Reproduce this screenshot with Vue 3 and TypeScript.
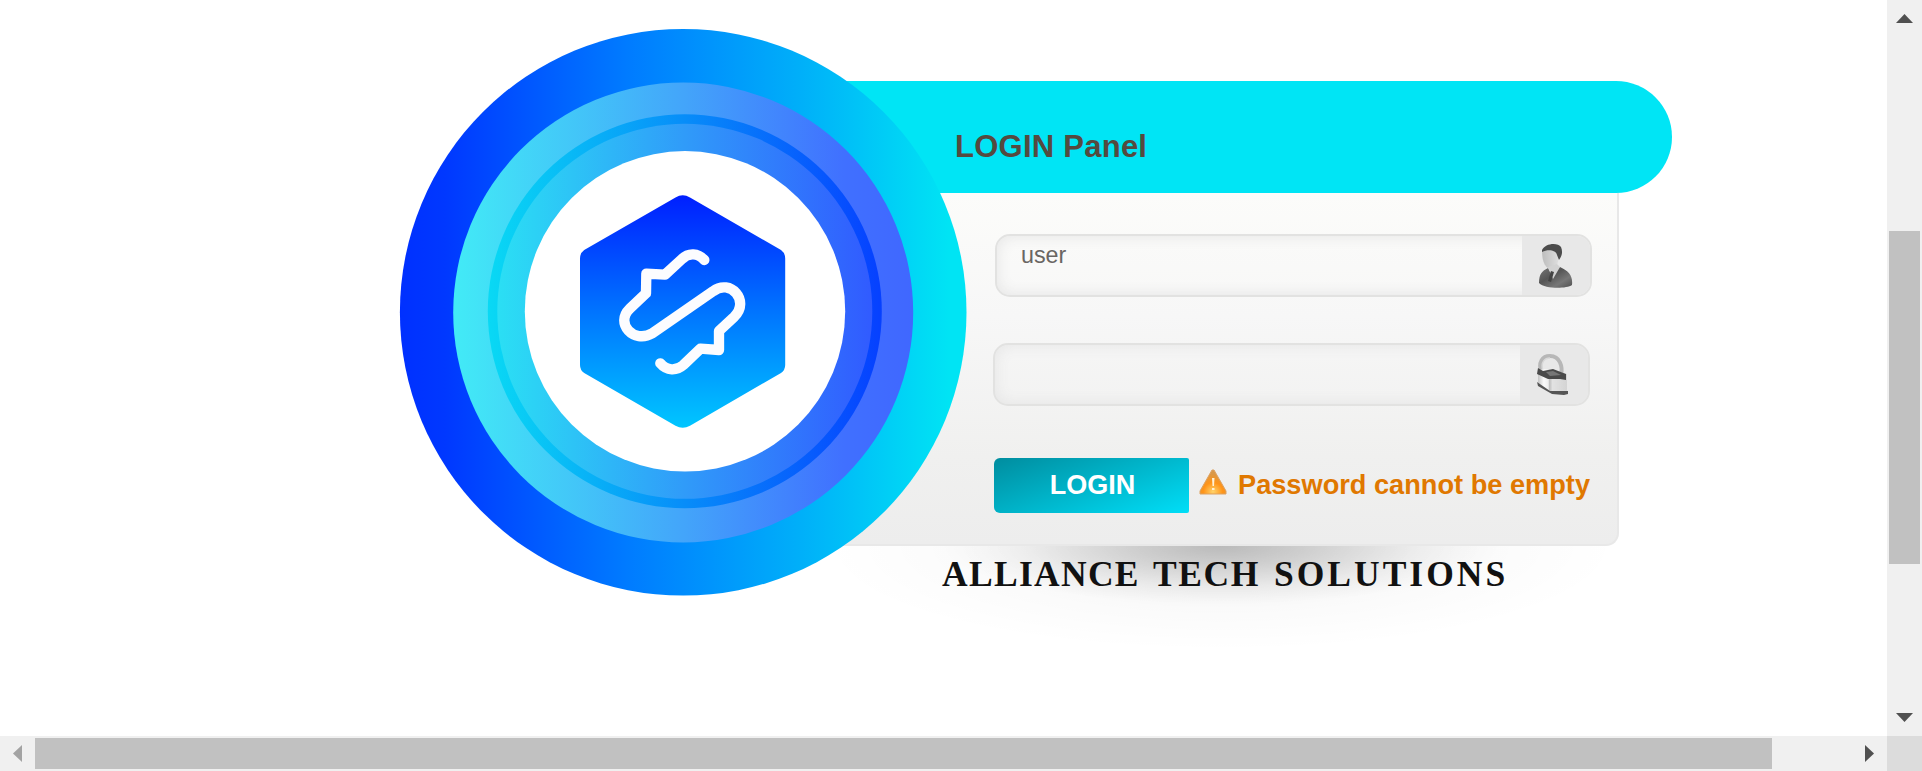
<script setup lang="ts">
import { ref } from 'vue'

const username = ref('user')
const password = ref('')
const message = ref('Password cannot be empty')
</script>

<template>
  <div class="window">
    <main class="page">
      <form class="card" @submit.prevent>
        <header class="card-head"><h1>LOGIN Panel</h1></header>
        <section class="card-body">
          <label class="field">
            <input v-model="username" type="text" aria-label="Username" />
            <span class="field-icon">
              <svg width="36" height="46" viewBox="0 0 36 46">
                <defs>
                  <linearGradient id="face" x1="0" x2="1"><stop stop-color="#bdbdbd" /><stop offset="1" stop-color="#dedede" /></linearGradient>
                  <linearGradient id="suit" x1="0" x2="1" y2="1"><stop stop-color="#777" /><stop offset=".4" stop-color="#555" /><stop offset=".7" stop-color="#777" /><stop offset="1" stop-color="#505050" /></linearGradient>
                </defs>
                <path d="M4 8C10 6 16 6 20 10C21 15 21 21 16 26C9 28 4 21 4 8Z" fill="url(#face)" />
                <path d="M4 7C7 0 20-1 23 4C25 9 24 13 21 17L19 12C18 7 10 6 4 9Z" fill="#4c4c4c" />
                <path d="M1 40C1 31 4 28 10 25L12 29L22 24C31 28 35 33 34 42C28 46 7 46 1 40Z" fill="url(#suit)" />
                <path d="M10 24L13 31L15 36L22 24L19 21Z" fill="#d2d2d2" />
                <path d="M13 28L10 38L13 39L16 29Z" fill="#444" />
              </svg>
            </span>
          </label>
          <label class="field field-password">
            <input v-model="password" type="password" aria-label="Password" />
            <span class="field-icon">
              <svg width="34" height="42" viewBox="0 0 34 42">
                <defs><linearGradient id="lock" x1="0" x2="1"><stop stop-color="#c4c4c4" /><stop offset=".2" stop-color="#fafafa" /><stop offset=".35" stop-color="#eee" /><stop offset=".4" stop-color="#bfbfbf" /><stop offset=".5" stop-color="#e2e2e2" /><stop offset="1" stop-color="#d4d4d4" /></linearGradient></defs>
                <path d="M6 20C1 8 7 2 14 2C24 2 27 13 25 21" fill="none" stroke="#b7b7b7" stroke-width="4" />
                <path d="M7 17C4 8 9 4 14 4" fill="none" stroke="#d9d9d9" stroke-width="1.5" />
                <path d="M2 16L10 15L31 20V38L18 40L2 31Z" fill="url(#lock)" />
                <path d="M2 14L7 17L17 15L30 20V26L24 25L12 25L1 20Z" fill="#4a4a4a" />
                <path d="M10 18L17 17L25 21L14 22Z" fill="#777" />
                <path d="M1 28L14 37L32 37V40L28 41L16 40L2 32Z" fill="#555" />
              </svg>
            </span>
          </label>
          <div class="actions">
            <button type="submit">LOGIN</button>
            <svg class="warning" width="28" height="26" viewBox="0 0 28 26">
              <defs><radialGradient id="warn" cx=".5" cy=".9" r=".75"><stop stop-color="#ffd36b" /><stop offset=".5" stop-color="#ff9418" /><stop offset="1" stop-color="#d99848" /></radialGradient></defs>
              <path d="M13 1H15L27 22V25H1V22Z" fill="url(#warn)" stroke="#dda262" />
              <path d="M13 9H15.5L15 17H13.5ZM13 19H15.5V21H13Z" fill="#fff1d4" />
            </svg>
            <span class="message">{{ message }}</span>
          </div>
        </section>
        <footer class="tagline">
          <span class="word-a">ALLIANCE</span><span class="word-b">TECH</span><span class="word-c">SOLUTIONS</span>
        </footer>
        <svg class="emblem" width="568" height="568" viewBox="399 28 568 568">
          <defs>
            <linearGradient id="outer" x1="0" x2="1"><stop stop-color="#0030ff" /><stop offset=".08" stop-color="#0038ff" /><stop offset=".4" stop-color="#007bff" /><stop offset=".7" stop-color="#00aef9" /><stop offset=".97" stop-color="#00e4f4" /></linearGradient>
            <linearGradient id="middle" x1="0" x2="1"><stop stop-color="#42ebf6" /><stop offset=".5" stop-color="#43a5fa" /><stop offset=".85" stop-color="#4070ff" /><stop offset="1" stop-color="#4067ff" /></linearGradient>
            <linearGradient id="ring" x1="0" x2="1"><stop stop-color="#09d9f4" /><stop offset=".5" stop-color="#078df9" /><stop offset="1" stop-color="#0640ff" /></linearGradient>
            <linearGradient id="inner" x1="0" x2="1"><stop stop-color="#2bdff4" /><stop offset=".5" stop-color="#309bf9" /><stop offset="1" stop-color="#315bff" /></linearGradient>
            <linearGradient id="hex" x1="0" x2="0" y1="0" y2="1"><stop stop-color="#001fff" /><stop offset=".5" stop-color="#0074ff" /><stop offset="1" stop-color="#00c6ff" /></linearGradient>
          </defs>
          <circle cx="683.2" cy="312.3" r="283.3" fill="url(#outer)" />
          <circle cx="683.2" cy="312.5" r="230" fill="url(#middle)" />
          <circle cx="684.8" cy="311.3" r="197" fill="url(#ring)" />
          <circle cx="684.8" cy="311.3" r="187.5" fill="url(#inner)" />
          <circle cx="685" cy="311.3" r="160.2" fill="#fff" />
          <path d="M675.5 197.5Q682.7 193.2 690 197.5L781 250Q785.2 253 785.2 258.5V365Q785.2 370 781 373L690 425.7Q682.7 430 675.5 425.7L584.2 373Q580 370 580 365V258.5Q580 253 584.2 250Z" fill="url(#hex)" />
          <g transform="translate(560 180) scale(.33333)" fill="none" stroke="#fcfcff" stroke-width="31" stroke-linecap="round" stroke-linejoin="round">
            <path d="M433 240C414 219 386 217 366 237L315 284L259 281L258 340L209 386C164 430 221 492 277 460L459 334C511 294 571 363 523 410L477 453L477 510L421 506L370 555C350 573 320 573 301 550" />
          </g>
        </svg>
      </form>
    </main>
    <div class="bar vertical">
      <svg width="17" height="9"><path d="M0 9L8.5 0L17 9Z" fill="#505050" /></svg>
      <i></i>
      <svg width="17" height="9"><path d="M0 0H17L8.5 9Z" fill="#505050" /></svg>
    </div>
    <div class="bar horizontal">
      <svg width="9" height="17"><path d="M9 0V17L0 8.5Z" fill="#a3a3a3" /></svg>
      <i></i>
      <svg width="9" height="17"><path d="M0 0V17L9 8.5Z" fill="#505050" /></svg>
    </div>
    <div class="corner"></div>
  </div>
</template>

<style>
html, body { margin: 0; overflow: hidden; }
</style>

<style scoped>
* { box-sizing: border-box; }
.window { display: grid; grid-template: 736px 35px / 1887px 35px; width: 1922px; height: 771px; font-family: "Liberation Sans", Arial, sans-serif; background: #fff; }
.page { overflow: hidden; padding: 81px 0 0 683px; }
.card { position: relative; width: 989px; }
.card-head { height: 112px; padding: 48px 0 0 272px; border-radius: 0 56px 56px 0; background: #00e5f5; }
h1 { margin: 0; font-size: 31px; line-height: 35px; letter-spacing: .25px; color: #554a3f; }
.card-body { width: 936px; height: 353px; padding: 41px 0 0 312px; border: solid #e8e8e8; border-width: 0 2px 2px 0; border-radius: 0 0 13px 0; background: linear-gradient(#fcfcfa, #f7f7f7 35%, #f0f0ef 75%, #ededed); }
.field { display: flex; width: 597px; height: 63px; border: 2px solid #e2e2e1; border-radius: 15px; overflow: hidden; box-shadow: inset 0 0 15px #e4e4e4; }
.field-password { margin: 46px 0 0 -2px; }
.field input { width: 525px; height: 38px; border: 0; padding: 0 0 0 24px; outline: 0; background: transparent; font: 23.3px/28px "Liberation Sans", Arial, sans-serif; color: #6a6663; }
.field-icon { display: flex; flex: 1; align-items: center; padding-left: 16px; background: #e8e8e8; }
.field-icon svg { filter: blur(.7px); }
.actions { display: flex; align-items: center; height: 55px; margin: 52px 0 0 -1px; }
button { width: 195px; height: 55px; padding: 0 0 1px 2px; border: 0; border-radius: 6px 2px 2px 6px; background: linear-gradient(160deg, #008d9f, #00def7); color: #fff; font: bold 27px "Liberation Sans", Arial, sans-serif; }
.warning { margin: -7px 0 0 10px; }
.message { margin: -1px 0 0 11px; font-size: 27.2px; line-height: 32px; font-weight: bold; color: #e07800; white-space: nowrap; }
.tagline { display: flex; height: 110px; padding: 8px 0 0 259px; background: radial-gradient(ellipse 280px 58px at 538px 0, rgba(0,0,0,.19), rgba(0,0,0,.13) 30%, rgba(0,0,0,.04) 70%, transparent), radial-gradient(ellipse 400px 105px at 538px 0, rgba(0,0,0,.1), rgba(0,0,0,.02) 60%, transparent); font: bold 35.5px/41px "Liberation Serif", serif; color: #111; }
.word-a { width: 211px; letter-spacing: 1.3px; }
.word-b { width: 121px; letter-spacing: 1.6px; }
.word-c { letter-spacing: 3px; }
.emblem { position: absolute; left: -284px; top: -53px; }
.bar { display: flex; align-items: center; background: #f0f0f0; }
.bar i { background: #c1c1c1; }
.vertical { flex-direction: column; padding: 14px 0; }
.vertical i { width: 31px; height: 333px; margin: 208px 0 149px; }
.horizontal { padding: 0 13px; }
.horizontal i { width: 1737px; height: 31px; margin: 0 93px 0 13px; }
.bar svg { flex: none; }
.corner { background: #dcdcdc; }
</style>
